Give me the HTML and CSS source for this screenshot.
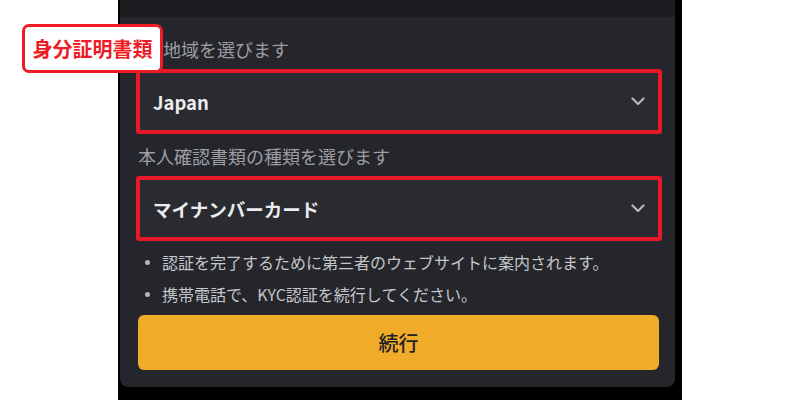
FILE: index.html
```html
<!DOCTYPE html>
<html lang="ja">
<head>
<meta charset="utf-8">
<link rel="stylesheet" href="styles.css">
</head>
<body>
<div class="stage">
  <div class="phone">
    <div class="topbar"></div>
    <div class="card">
      <div class="field-label behind-tag">地域を選びます</div>
      <div class="select hl">
        <span class="select-value">Japan</span>
        <svg class="chev" width="14" height="9" viewBox="0 0 14 9"><path d="M1.5 1.5 L7 7 L12.5 1.5" fill="none" stroke="#b4b6bb" stroke-width="2.2" stroke-linecap="round" stroke-linejoin="round"/></svg>
      </div>
      <div class="field-label">本人確認書類の種類を選びます</div>
      <div class="select hl">
        <span class="select-value">マイナンバーカード</span>
        <svg class="chev" width="14" height="9" viewBox="0 0 14 9"><path d="M1.5 1.5 L7 7 L12.5 1.5" fill="none" stroke="#b4b6bb" stroke-width="2.2" stroke-linecap="round" stroke-linejoin="round"/></svg>
      </div>
      <ul class="notes">
        <li>認証を完了するために第三者のウェブサイトに案内されます。</li>
        <li>携帯電話で、KYC認証を続行してください。</li>
      </ul>
      <button class="btn">続行</button>
    </div>
  </div>
  <div class="tag">身分証明書類</div>
</div>
</body>
</html>
```
FILE: styles.css
```css
* { box-sizing: border-box; }
html, body { margin: 0; padding: 0; background: #fff; }
body { font-family: "Noto Sans CJK JP", "Noto Sans", sans-serif; }
.stage {
  position: relative;
  width: 800px;
  height: 400px;
  display: flex;
  justify-content: center;
  overflow: hidden;
}
.phone {
  width: 564px;
  height: 400px;
  background: #000;
  padding: 0 7px 0 2px;
  display: flex;
  flex-direction: column;
}
.topbar {
  height: 17px;
  background: #1c1d21;
  flex: none;
}
.card {
  background: #25262b;
  border-radius: 0 0 8px 8px;
  padding: 20px 13px 17px 16px;
  display: flex;
  flex-direction: column;
}
.field-label {
  color: #9c9ea4;
  font-size: 18px;
  line-height: 24px;
  padding-left: 2px;
  margin-bottom: 8px;
  white-space: nowrap;
}
.field-label.behind-tag { padding-left: 27px; }
.select {
  height: 65px;
  flex: none;
  background: #2a2b30;
  border: 4px solid #e8182b;
  border-radius: 3px;
  display: flex;
  align-items: center;
  justify-content: space-between;
  padding: 0 13px 0 13px;
  margin-bottom: 10px;
}
.select + .notes { margin-top: -5px; }
.select-value {
  color: #eaecef;
  font-weight: 700;
  font-size: 18.5px;
}
.chev { display: block; }
.notes {
  list-style: none;
  margin: 0;
  padding: 0 0 0 6px;
  color: #c6c7cb;
  font-size: 16px;
  line-height: 32px;
  white-space: nowrap;
}
.notes li { display: flex; align-items: center; }
.notes li::before {
  content: "";
  width: 5px;
  height: 5px;
  border-radius: 50%;
  background: #b5b7bc;
  margin-right: 12px;
  margin-left: 3px;
  flex: none;
}
.btn {
  margin-top: 5px;
  height: 55px;
  flex: none;
  width: 521px;
  margin-left: 2px;
  background: #f0ac29;
  border: none;
  border-radius: 6px;
  color: #1e2026;
  font-family: inherit;
  font-size: 20px;
  font-weight: 500;
}
.tag {
  position: absolute;
  left: 22px;
  top: 24px;
  width: 141px;
  height: 49px;
  background: #fff;
  border: 3px solid #ee1c25;
  border-radius: 7px;
  color: #ee1c25;
  font-weight: 700;
  font-size: 20px;
  display: flex;
  align-items: center;
  justify-content: center;
}
```
